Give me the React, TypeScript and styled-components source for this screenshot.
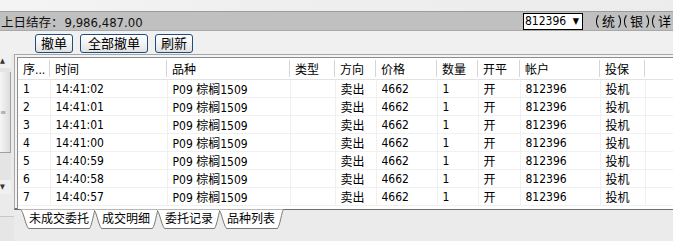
import styled, { createGlobalStyle } from 'styled-components';

const GlobalStyle = createGlobalStyle`
    body {
        margin: 0;
        background: #ebebeb;
        font-family: "DejaVu Sans Condensed", "DejaVu Sans", "Noto Sans CJK SC", sans-serif;
        font-stretch: condensed;
        font-size: 12px;
        color: #000;
    }
`

const Page = styled.div`
    width: 673px;
    height: 241px;
    overflow: hidden;
    background: #ebebeb;
`
const TopStrip = styled.div`
    height: 11px;
    background: linear-gradient(to right, #f4f4f4, #efefef 40%, #ececec);
`
const BalanceBar = styled.div`
    height: 18px;
    display: flex;
    align-items: center;
    background: #c0c0c0;
    border-top: 1px solid #9c9c9c;
    border-bottom: 1px solid #a8a8a8;
    white-space: nowrap;
    overflow: hidden;
`
const BalanceText = styled.div`
    flex: 0 0 522px;
    padding-left: 1px;
    font-size: 12.5px;
    color: #111;
`
const BalanceValue = styled.span`
    font-size: 13px;
    margin-left: 1px;
`
const AccountSelect = styled.div`
    flex: 0 0 auto;
    width: 54px;
    height: 15px;
    display: flex;
    align-items: center;
    justify-content: space-between;
    padding: 0 3px 0 1px;
    box-sizing: content-box;
    background: #fff;
    border: 1px solid #000;
    font-size: 12px;
    margin-right: 13px;
`
const Caret = styled.span`
    font-size: 9px;
`
const BracketButton = styled.div`
    flex: 0 0 auto;
    height: 15px;
    line-height: 15px;
    padding: 0 5px;
    margin-right: 3px;
    border: 1px solid #000;
    border-top-color: transparent;
    border-bottom-color: transparent;
    border-radius: 7px / 8px;
    font-size: 13px;
`
const ButtonRow = styled.div`
    height: 23px;
    display: flex;
    align-items: center;
    gap: 7px;
    padding-left: 35px;
    background: #f0f0f0;
`
const ActionButton = styled.button<{ $w: number }>`
    width: ${p => p.$w}px;
    height: 19px;
    padding: 0;
    margin-top: 1px;
    border: 1px solid #1f4d7c;
    border-radius: 3px;
    background: linear-gradient(#ffffff, #f2f2f2 50%, #e2e2e2);
    font-family: inherit;
    font-size: 13px;
    line-height: 15px;
    color: #000;
`
const Body = styled.div`
    display: flex;
    height: 187px;
`
const LeftStrip = styled.div`
    width: 14px;
    flex: 0 0 14px;
    display: flex;
    flex-direction: column;
    background: #ebebeb;
`
const ScrollArrow = styled.div`
    height: 14px;
    width: 11px;
    display: flex;
    align-items: center;
    justify-content: flex-start;
    font-size: 7px;
    color: #333;
    background: #f0f0f0;
`
const ScrollTrack = styled.div`
    width: 11px;
    height: 112px;
    background: #e4e4e4;
    display: flex;
    flex-direction: column;
`
const ScrollThumb = styled.div`
    height: 80px;
    margin-top: 4px;
    border-right: 1px solid #a0a0a0;
    border-bottom: 1px solid #a0a0a0;
    background: linear-gradient(to right, #f6f6f6, #dcdcdc);
    display: flex;
    align-items: center;
    font-size: 8px;
    color: #888;
`
const LeftFoot = styled.div`
    margin-top: 22px;
    border-top: 1px solid #c8c8c8;
    flex: 1;
    background: #e6e6e6;
`
const RightColumn = styled.div`
    flex: 1;
    display: flex;
    flex-direction: column;
    min-width: 0;
`
const TablePanel = styled.div`
    height: 151px;
    border-top: 1px solid #a8a8a8;
    border-left: 1px solid #a8a8a8;
    border-bottom: 2px solid #6e6e6e;
    padding: 2px 0 0 2px;
    background: #f4f4f4;
`
const TableInner = styled.div`
    height: 100%;
    border-top: 1px solid #8c8c8c;
    border-left: 1px solid #8c8c8c;
    background: #fff;
    overflow: hidden;
`
const Grid = styled.table`
    border-collapse: collapse;
    table-layout: fixed;
    width: 100%;
`
const HeadCell = styled.th`
    height: 21px;
    padding: 0 0 0 5px;
    text-align: left;
    font-weight: normal;
    white-space: nowrap;
    border-bottom: 1px solid #e2e2e2;
    background: linear-gradient(to right, #d6d6d6, #d6d6d6) no-repeat right 2px / 1px 17px, #fff;
`
const Cell = styled.td`
    height: 17px;
    padding: 0 0 0 5px;
    white-space: nowrap;
    border-right: 1px solid #f0f0f0;
    border-bottom: 1px solid #f0f0f0;
`
const TabsRow = styled.div`
    display: flex;
    padding-left: 6px;
    height: 20px;
`
const Tab = styled.div<{ $w: number }>`
    position: relative;
    width: ${p => p.$w}px;
    height: 20px;
    margin-right: -3px;
    font-size: 12px;
    line-height: 18px;
    padding-left: 9px;
    box-sizing: border-box;
    white-space: nowrap;
`
const TabShape = styled.svg`
    position: absolute;
    left: 0;
    top: -1px;
    z-index: 0;
`
const TabLabel = styled.span`
    position: relative;
    z-index: 1;
`

const columns = [
    { title: '序...', width: 32 },
    { title: '时间', width: 117 },
    { title: '品种', width: 123 },
    { title: '类型', width: 45 },
    { title: '方向', width: 41 },
    { title: '价格', width: 61 },
    { title: '数量', width: 41 },
    { title: '开平', width: 42 },
    { title: '帐户', width: 80 },
    { title: '投保', width: 45 },
    { title: '', width: 40 },
]

const times = ['14:41:02', '14:41:01', '14:41:01', '14:41:00', '14:40:59', '14:40:58', '14:40:57']

const rows = times.map((t, i) => [
    String(i + 1), t, 'P09 棕榈1509', '', '卖出', '4662', '1', '开', '812396', '投机', '',
])

const tabs = [
    { label: '未成交委托', w: 76 },
    { label: '成交明细', w: 66 },
    { label: '委托记录', w: 65 },
    { label: '品种列表', w: 66 },
]

const TabItem = ({ label, w }: { label: string; w: number }) => (
    <Tab $w={w}>
        <TabShape width={w} height={21} viewBox={`0 0 ${w} 21`}>
            <path
                d={`M0.5,0.5 C3.5,2 5,15 8.5,19.5 L${w - 6.5},19.5 C${w - 3.5},15 ${w - 2.5},3 ${w - 0.5},0.5`}
                fill="#fff"
                stroke="#7a7a7a"
                strokeWidth={1}
            />
        </TabShape>
        <TabLabel>{label}</TabLabel>
    </Tab>
)

const App = () => {
    return (
        <Page>
            <GlobalStyle />
            <TopStrip />
            <BalanceBar>
                <BalanceText>
                    上日结存：<BalanceValue>9,986,487.00</BalanceValue>
                </BalanceText>
                <AccountSelect>
                    812396 <Caret>▼</Caret>
                </AccountSelect>
                <BracketButton>统</BracketButton>
                <BracketButton>银</BracketButton>
                <BracketButton>详</BracketButton>
            </BalanceBar>
            <ButtonRow>
                <ActionButton $w={38}>撤单</ActionButton>
                <ActionButton $w={68}>全部撤单</ActionButton>
                <ActionButton $w={38}>刷新</ActionButton>
            </ButtonRow>
            <Body>
                <LeftStrip>
                    <ScrollArrow>▲</ScrollArrow>
                    <ScrollTrack>
                        <ScrollThumb>≡</ScrollThumb>
                    </ScrollTrack>
                    <ScrollArrow>▼</ScrollArrow>
                    <LeftFoot />
                </LeftStrip>
                <RightColumn>
                    <TablePanel>
                        <TableInner>
                            <Grid>
                                <colgroup>
                                    {columns.map((c, i) => (
                                        <col key={i} style={{ width: c.width }} />
                                    ))}
                                </colgroup>
                                <thead>
                                    <tr>
                                        {columns.map((c, i) => (
                                            <HeadCell key={i}>{c.title}</HeadCell>
                                        ))}
                                    </tr>
                                </thead>
                                <tbody>
                                    {rows.map((r, i) => (
                                        <tr key={i}>
                                            {r.map((v, j) => (
                                                <Cell key={j}>{v}</Cell>
                                            ))}
                                        </tr>
                                    ))}
                                </tbody>
                            </Grid>
                        </TableInner>
                    </TablePanel>
                    <TabsRow>
                        {tabs.map(t => (
                            <TabItem key={t.label} label={t.label} w={t.w} />
                        ))}
                    </TabsRow>
                </RightColumn>
            </Body>
        </Page>
    )
}

export default App;
